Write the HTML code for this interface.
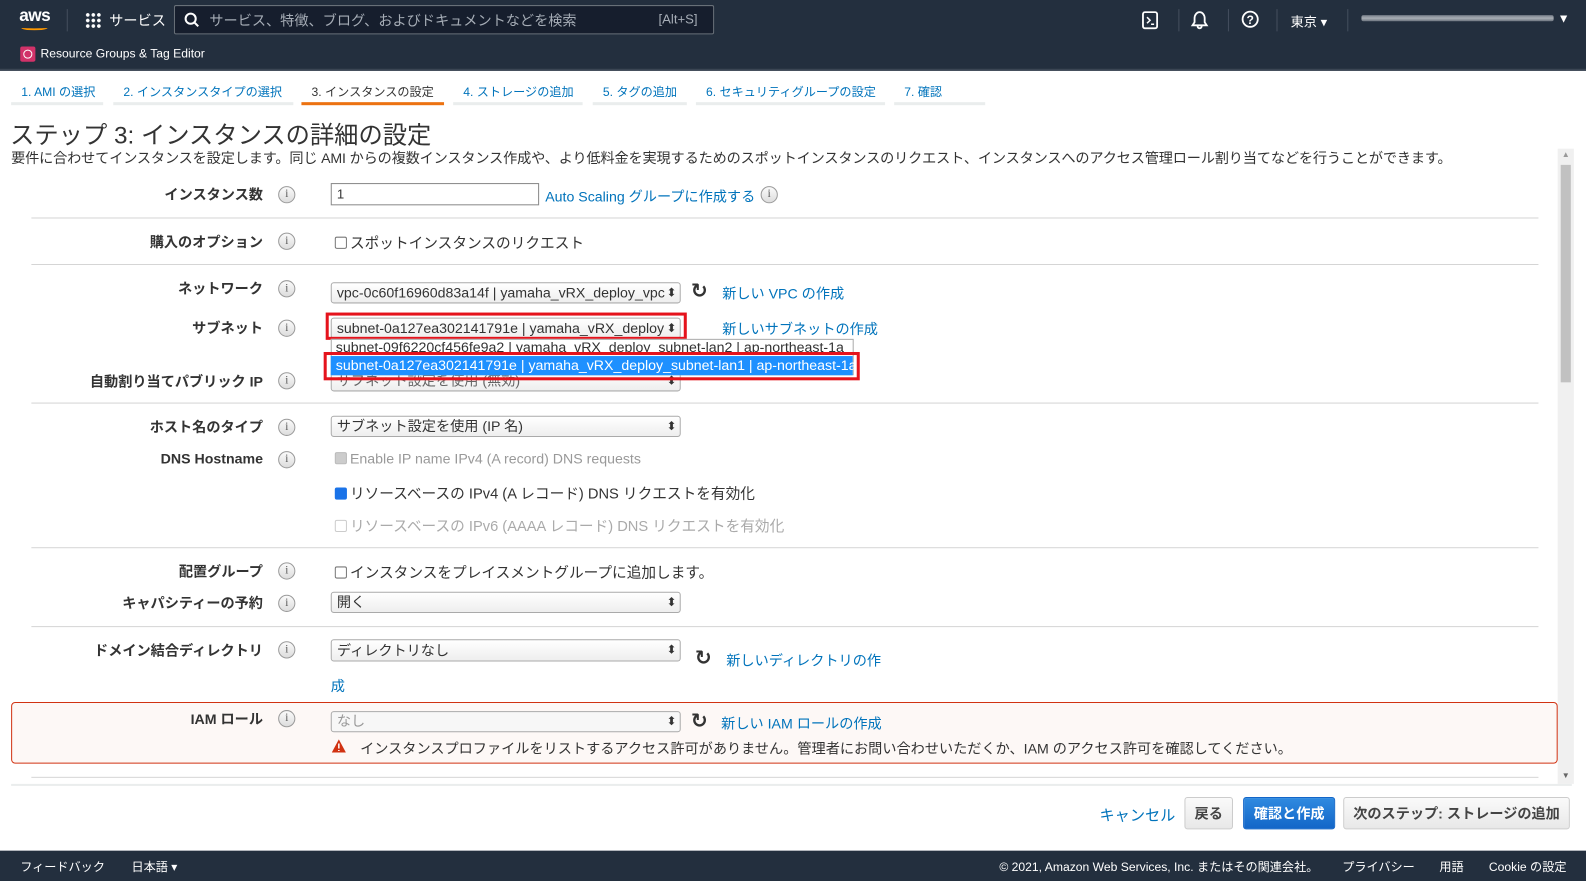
<!DOCTYPE html>
<html><head><meta charset="utf-8"><style>
*{box-sizing:border-box;margin:0;padding:0}
body{width:1586px;height:881px;overflow:hidden;background:#fff;font-family:"Liberation Sans","Noto Sans CJK JP",sans-serif;font-size:14px;color:#333;position:relative}
#root{position:absolute;left:0;top:0;width:1568px;height:871px;transform:scale(1.01148);transform-origin:0 0}
.a{position:absolute;white-space:nowrap}
.hdr{position:absolute;left:0;top:0;width:1568px;height:70px;background:#232f3e;border-bottom:2px solid #3a4553}
.w{color:#fff}
.tab{position:absolute;top:82px;font-size:12px;color:#0073bb;white-space:nowrap}
.tl{position:absolute;top:101px;height:3px;background:#eaeded}
.lbl{position:absolute;right:1308px;font-size:14px;font-weight:bold;color:#333;white-space:nowrap}
.i{position:absolute;left:275px;width:17px;height:17px;border:1px solid #999;border-radius:50%;background:linear-gradient(#fafafa,#ddd);font-size:11px;text-align:center;line-height:15px;color:#555;font-family:"Liberation Serif",serif}
.hr{position:absolute;left:31px;width:1490px;height:1px;background:#d5d5d5}
.sel{position:absolute;left:327px;height:21px;border:1px solid #aaa;border-radius:3px;background:linear-gradient(#fff,#eee);font-size:14px;line-height:19px;padding-left:5px;color:#333;white-space:nowrap;overflow:hidden}
.sel:after{content:"⬍";position:absolute;right:3px;top:0;font-size:12px;color:#333}
.lnk{color:#0073bb}
.cb{display:inline-block;width:12px;height:12px;border:1px solid #777;border-radius:2px;vertical-align:-1px;margin-right:3px;background:#fff}
.ref{position:absolute;font-size:20px;font-weight:bold;color:#333;font-family:"DejaVu Sans",sans-serif}
.btn{position:absolute;top:788px;height:32px;border:1px solid #ccc;border-radius:3px;background:linear-gradient(#fafafa,#e8e8e8);font-size:14px;font-weight:bold;line-height:30px;text-align:center;color:#444;white-space:nowrap}
</style></head><body><div id="root">
<div class="hdr"></div>
<div class="a w" style="left:19px;top:6px;font-size:17px;font-weight:bold;letter-spacing:-0.5px">aws</div>
<div class="a" style="left:21px;top:25px;width:26px;height:5px;border-bottom:2px solid #f90;border-radius:0 0 50% 50%"></div>
<div class="a" style="left:66px;top:9px;width:1px;height:22px;background:#444f5e"></div>
<div class="a" style="left:84px;top:12px;width:16px;height:16px;background:radial-gradient(circle,#fff 1.6px,transparent 2px) 0 0/5.5px 5.5px"></div>
<div class="a w" style="left:108px;top:10px;font-size:14px">サービス</div>
<div class="a" style="left:172px;top:5px;width:534px;height:29px;border:1px solid #687078;border-radius:2px;background:#161e2d"></div>
<svg class="a" style="left:182px;top:12px" width="16" height="16"><circle cx="6.5" cy="6.5" r="5" stroke="#fff" stroke-width="2" fill="none"/><path d="M10 10l4 4" stroke="#fff" stroke-width="2"/></svg>
<div class="a" style="left:207px;top:10px;font-size:14px;color:#a6adb6">サービス、特徴、ブログ、およびドキュメントなどを検索</div>
<div class="a" style="left:651px;top:11px;font-size:13px;color:#a6adb6">[Alt+S]</div>
<svg class="a" style="left:1129px;top:11px" width="16" height="18"><rect x="1" y="1" width="14" height="16" rx="2" stroke="#fff" stroke-width="1.8" fill="none"/><path d="M5 6l3 3-3 3M9 13h3" stroke="#fff" stroke-width="1.5" fill="none"/></svg>
<svg class="a" style="left:1177px;top:10px" width="18" height="19"><path d="M9 2c-3 0-5 3-5 6v4l-2 3h14l-2-3V8c0-3-2-6-5-6zM7 16a2 2 0 004 0" stroke="#fff" stroke-width="1.8" fill="none"/></svg>
<svg class="a" style="left:1227px;top:10px" width="18" height="18"><circle cx="9" cy="9" r="7.5" stroke="#fff" stroke-width="1.8" fill="none"/><text x="9" y="13.5" font-size="12" font-weight="bold" fill="#fff" text-anchor="middle" font-family="Liberation Sans">?</text></svg>
<div class="a" style="left:1165px;top:9px;width:1px;height:22px;background:#444f5e"></div>
<div class="a" style="left:1214px;top:9px;width:1px;height:22px;background:#444f5e"></div>
<div class="a" style="left:1262px;top:9px;width:1px;height:22px;background:#444f5e"></div>
<div class="a" style="left:1332px;top:9px;width:1px;height:22px;background:#444f5e"></div>
<div class="a w" style="left:1276px;top:11px;font-size:13px">東京 ▾</div>
<div class="a" style="left:1346px;top:15px;width:190px;height:6px;background:linear-gradient(#8b929b,#c9cdd2,#7e858e);opacity:.8;border-radius:2px"></div>
<div class="a w" style="left:1540px;top:11px;font-size:12px">▼</div>
<div class="a" style="left:20px;top:46px;width:15px;height:15px;background:#d13269;border-radius:2px"></div>
<div class="a" style="left:23px;top:49px;width:9px;height:9px;border:1.5px solid #fff;border-radius:50%"></div>
<div class="a w" style="left:40px;top:46px;font-size:12px">Resource Groups &amp; Tag Editor</div>

<div class="tab" style="left:21px">1. AMI の選択</div><div class="tl" style="left:11px;width:91px"></div>
<div class="tab" style="left:122px">2. インスタンスタイプの選択</div><div class="tl" style="left:112px;width:178px"></div>
<div class="tab" style="left:308px;color:#333">3. インスタンスの設定</div><div class="tl" style="left:298px;width:141px;background:#ec7211"></div>
<div class="tab" style="left:458px">4. ストレージの追加</div><div class="tl" style="left:448px;width:128px"></div>
<div class="tab" style="left:596px">5. タグの追加</div><div class="tl" style="left:586px;width:93px"></div>
<div class="tab" style="left:698px">6. セキュリティグループの設定</div><div class="tl" style="left:688px;width:187px"></div>
<div class="tab" style="left:894px">7. 確認</div><div class="tl" style="left:884px;width:90px"></div>

<div class="a" style="left:10px;top:114px;font-size:24px;color:#333">ステップ 3: インスタンスの詳細の設定</div>
<div class="a" style="left:11px;top:146px;font-size:14px;color:#333;letter-spacing:-0.15px">要件に合わせてインスタンスを設定します。同じ AMI からの複数インスタンス作成や、より低料金を実現するためのスポットインスタンスのリクエスト、インスタンスへのアクセス管理ロール割り当てなどを行うことができます。</div>
<div class="a" style="left:1540px;top:147px;width:16px;height:628px;background:#f0f0f0"></div>
<div class="a" style="left:1543px;top:163px;width:10px;height:215px;background:#c1c1c1"></div>
<div class="a" style="left:1544px;top:148px;font-size:8px;color:#999">▲</div>
<div class="a" style="left:1544px;top:762px;font-size:8px;color:#666">▼</div>

<div class="lbl" style="top:182px">インスタンス数</div><div class="i" style="top:184px">i</div>
<div class="a" style="left:327px;top:181px;width:206px;height:22px;border:1px solid #888;font-size:13px;line-height:20px;padding-left:5px">1</div>
<div class="a lnk" style="left:539px;top:184px">Auto Scaling グループに作成する</div><div class="i" style="left:752px;top:184px">i</div>
<div class="hr" style="top:215px"></div>
<div class="lbl" style="top:229px">購入のオプション</div><div class="i" style="top:230px">i</div>
<div class="a" style="left:331px;top:229px;font-size:14.5px"><span class="cb"></span>スポットインスタンスのリクエスト</div>
<div class="hr" style="top:261px"></div>
<div class="lbl" style="top:275px">ネットワーク</div><div class="i" style="top:277px">i</div>
<div class="sel" style="top:279px;width:346px;padding-right:18px">vpc-0c60f16960d83a14f | yamaha_vRX_deploy_vpc</div>
<div class="ref" style="left:683px;top:275px">↻</div>
<div class="a lnk" style="left:714px;top:280px">新しい VPC の作成</div>
<div class="lbl" style="top:314px">サブネット</div><div class="i" style="top:316px">i</div>
<div class="sel" style="top:314px;width:346px;padding-right:18px">subnet-0a127ea302141791e | yamaha_vRX_deploy</div>
<div class="a" style="left:322px;top:309px;width:357px;height:27px;border:3px solid #e5131c"></div>
<div class="a lnk" style="left:714px;top:315px">新しいサブネットの作成</div>
<div class="lbl" style="top:367px">自動割り当てパブリック IP</div><div class="i" style="top:368px">i</div>
<div class="sel" style="top:366px;width:346px;color:#666">サブネット設定を使用 (無効)</div>
<div class="a" style="left:327px;top:335px;width:517px;height:36px;background:#fff;border:1px solid #aaa"></div>
<div class="a" style="left:332px;top:335px;font-size:14px">subnet-09f6220cf456fe9a2 | yamaha_vRX_deploy_subnet-lan2 | ap-northeast-1a</div>
<div class="a" style="left:327px;top:352px;width:516px;height:19px;background:#1e90ff"></div>
<div class="a" style="left:332px;top:353px;font-size:14px;color:#fff">subnet-0a127ea302141791e | yamaha_vRX_deploy_subnet-lan1 | ap-northeast-1a</div>
<div class="a" style="left:320px;top:348px;width:530px;height:28px;border:3px solid #e5131c"></div>
<div class="hr" style="top:398px"></div>
<div class="lbl" style="top:412px">ホスト名のタイプ</div><div class="i" style="top:414px">i</div>
<div class="sel" style="top:411px;width:346px">サブネット設定を使用 (IP 名)</div>
<div class="lbl" style="top:445px">DNS Hostname</div><div class="i" style="top:446px">i</div>
<div class="a" style="left:331px;top:445px;color:#999"><span class="cb" style="background:#ccc;border-color:#bbb"></span>Enable IP name IPv4 (A record) DNS requests</div>
<div class="a" style="left:331px;top:477px;font-size:14.5px"><span class="cb" style="background:#1a73e8;border-color:#1a73e8"></span>リソースベースの IPv4 (A レコード) DNS リクエストを有効化</div>
<div class="a" style="left:331px;top:509px;font-size:14.5px;color:#aaa"><span class="cb" style="border-color:#ccc"></span>リソースベースの IPv6 (AAAA レコード) DNS リクエストを有効化</div>
<div class="hr" style="top:541px"></div>
<div class="lbl" style="top:555px">配置グループ</div><div class="i" style="top:556px">i</div>
<div class="a" style="left:331px;top:555px;font-size:14.5px"><span class="cb"></span>インスタンスをプレイスメントグループに追加します。</div>
<div class="lbl" style="top:586px">キャパシティーの予約</div><div class="i" style="top:588px">i</div>
<div class="sel" style="top:585px;width:346px">開く</div>
<div class="hr" style="top:619px"></div>
<div class="lbl" style="top:633px">ドメイン結合ディレクトリ</div><div class="i" style="top:634px">i</div>
<div class="sel" style="top:632px;width:346px;height:22px;padding-top:1px">ディレクトリなし</div>
<div class="ref" style="left:687px;top:638px">↻</div>
<div class="a lnk" style="left:718px;top:643px">新しいディレクトリの作</div>
<div class="a lnk" style="left:327px;top:668px">成</div>
<div class="a" style="left:11px;top:694px;width:1529px;height:61px;border:1px solid #d13212;border-radius:4px;background:#fdf8f6"></div>
<div class="lbl" style="top:701px">IAM ロール</div><div class="i" style="top:702px">i</div>
<div class="sel" style="top:703px;width:346px;color:#999;background:#f7f7f7">なし</div>
<div class="ref" style="left:683px;top:700px">↻</div>
<div class="a lnk" style="left:713px;top:705px">新しい IAM ロールの作成</div>
<svg class="a" style="left:328px;top:731px" width="14" height="13"><path d="M7 0L14 13H0z" fill="#d13212"/><path d="M7 4v5M7 10.5v1" stroke="#fff" stroke-width="1.5"/></svg>
<div class="a" style="left:356px;top:730px">インスタンスプロファイルをリストするアクセス許可がありません。管理者にお問い合わせいただくか、IAM のアクセス許可を確認してください。</div>
<div class="hr" style="top:768px"></div>
<div class="a" style="left:11px;top:775px;width:1543px;height:2px;background:#eaeded"></div>

<div class="a lnk" style="left:1087px;top:795px;font-size:15px">キャンセル</div>
<div class="btn" style="left:1171px;width:48px">戻る</div>
<div class="btn" style="left:1229px;width:91px;background:linear-gradient(#2f8ae0,#1366c8);border-color:#1366c8;color:#fff">確認と作成</div>
<div class="btn" style="left:1328px;width:224px">次のステップ: ストレージの追加</div>

<div class="a" style="left:0;top:841px;width:1568px;height:30px;background:#232f3e"></div>
<div class="a w" style="left:20px;top:848px;font-size:12px">フィードバック</div>
<div class="a w" style="left:130px;top:848px;font-size:12px">日本語 ▾</div>
<div class="a w" style="left:988px;top:848px;font-size:12px">© 2021, Amazon Web Services, Inc. またはその関連会社。</div>
<div class="a w" style="left:1327px;top:848px;font-size:12px">プライバシー</div>
<div class="a w" style="left:1423px;top:848px;font-size:12px">用語</div>
<div class="a w" style="left:1472px;top:848px;font-size:12px">Cookie の設定</div>
</div></body></html>
